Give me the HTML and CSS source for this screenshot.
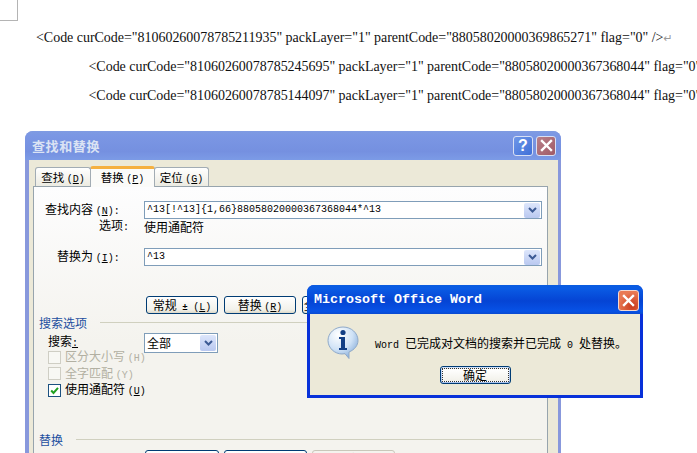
FILE: index.html
```html
<!DOCTYPE html>
<html lang="zh">
<head>
<meta charset="utf-8">
<title>查找和替换</title>
<link rel="stylesheet" href="styles.css">
</head>
<body>
<div class="page">
  <div class="corner"></div>
  <div class="doc">
    <p class="line">&lt;Code curCode="81060260078785211935" packLayer="1" parentCode="88058020000369865271" flag="0" /&gt;<span class="ret">↵</span></p>
    <p class="line indent">&lt;Code curCode="81060260078785245695" packLayer="1" parentCode="88058020000367368044" flag="0" /&gt;</p>
    <p class="line indent">&lt;Code curCode="81060260078785144097" packLayer="1" parentCode="88058020000367368044" flag="0" /&gt;</p>
  </div>

  <section class="dlg">
    <header class="dlg-title">
      <span class="dlg-name">查找和替换</span>
      <span class="cap-btn help">?</span>
      <span class="cap-btn close-dim"><svg width="13" height="13" viewBox="0 0 13 13"><path d="M2 2l9 9M11 2l-9 9" stroke="#fff" stroke-width="2.4" stroke-linecap="square"/></svg></span>
    </header>
    <div class="dlg-body">
      <div class="tabs">
        <span class="tab">查找 <span class="lat">(<u>D</u>)</span></span>
        <span class="tab active">替换 <span class="lat">(<u>P</u>)</span></span>
        <span class="tab">定位 <span class="lat">(<u>G</u>)</span></span>
      </div>
      <div class="panel">
        <div class="row">
          <span class="lab lab-a">查找内容 <span class="lat">(<u>N</u>):</span></span>
          <div class="combo"><span class="val">^13[!^13]{1,66}88058020000367368044*^13</span>
            <span class="drop"><svg width="9" height="7" viewBox="0 0 9 7"><path d="M1 1l3.5 3.5L8 1" fill="none" stroke="#3c5a94" stroke-width="2"/></svg></span></div>
        </div>
        <div class="row opts">
          <span class="lab lab-b">选项<span class="lat">:</span></span>
          <span>使用通配符</span>
        </div>
        <div class="row second">
          <span class="lab lab-c">替换为 <span class="lat">(<u>I</u>):</span></span>
          <div class="combo"><span class="val">^13</span>
            <span class="drop"><svg width="9" height="7" viewBox="0 0 9 7"><path d="M1 1l3.5 3.5L8 1" fill="none" stroke="#3c5a94" stroke-width="2"/></svg></span></div>
        </div>
        <div class="btns">
          <span class="btn b72">常规 <span class="arrows">±</span> <span class="lat">(<u>L</u>)</span></span>
          <span class="btn b72">替换 <span class="lat">(<u>R</u>)</span></span>
          <span class="btn b72">全部替换 <span class="lat">(<u>A</u>)</span></span>
        </div>
        <div class="sect"><span>搜索选项</span><i class="rule"></i></div>
        <div class="search">
          <div class="checks">
            <span class="search-lab">搜索<u class="lat">:</u></span>
            <label class="chk off"><i class="box"></i><span>区分大小写 <span class="lat">(H)</span></span></label>
            <label class="chk off"><i class="box"></i><span>全字匹配 <span class="lat">(Y)</span></span></label>
            <label class="chk"><i class="box on"><svg width="9" height="9" viewBox="0 0 9 9"><path d="M1.2 4.5l2.3 2.5L8 1.8" fill="none" stroke="#21a121" stroke-width="2"/></svg></i><span>使用通配符 <span class="lat">(<u>U</u>)</span></span></label>
          </div>
          <div class="select"><span class="val">全部</span>
            <span class="drop"><svg width="9" height="7" viewBox="0 0 9 7"><path d="M1 1l3.5 3.5L8 1" fill="none" stroke="#3c5a94" stroke-width="2"/></svg></span></div>
        </div>
        <div class="sect sect2"><span>替换</span><i class="rule"></i></div>
        <div class="btns low">
          <span class="btn b73">格式 <span class="lat">(<u>O</u>)</span> ▾</span>
          <span class="btn b83">特殊字符 <span class="lat">(<u>E</u>)</span> ▾</span>
          <span class="btn b83 dis">不限定格式</span>
        </div>
      </div>
    </div>
  </section>

  <section class="msg">
    <header class="msg-title">
      <span class="msg-name">Microsoft Office Word</span>
      <span class="msg-close"><svg width="13" height="13" viewBox="0 0 13 13"><path d="M2 2l9 9M11 2l-9 9" stroke="#fff" stroke-width="2.4" stroke-linecap="square"/></svg></span>
    </header>
    <div class="msg-body">
      <div class="msg-main">
        <svg class="info" width="32" height="33" viewBox="0 0 32 33">
          <defs><radialGradient id="bub" cx="35%" cy="25%" r="85%"><stop offset="0" stop-color="#ffffff"/><stop offset=".55" stop-color="#cfe2f6"/><stop offset="1" stop-color="#7ea6d6"/></radialGradient></defs>
          <path d="M16 1C7.7 1 1 7 1 14.5S7.7 28 15 28c1 0 2-.1 3-.3L22 32.500V26c5.500-2.200 9-6.500 9-11.500C31 7 24.300 1 16 1z" fill="url(#bub)" stroke="#8fa9c8"/>
          <circle cx="16" cy="6.500" r="2.600" fill="#123f86"/>
          <path d="M12 11h6v11h2v2h-8v-2h2v-9h-2z" fill="#123f86"/>
        </svg>
        <p class="msg-text">Word <span class="cjk">已完成对文档的搜索并已完成</span> 0 <span class="cjk">处替换。</span></p>
      </div>
      <div class="msg-actions"><span class="ok"><span class="ok-in">确定</span></span></div>
    </div>
  </section>
</div>
</body>
</html>
```
FILE: styles.css
```css
* { box-sizing: border-box; }
html, body { margin: 0; padding: 0; background: #fff; }
.page {
  position: relative;
  width: 697px;
  height: 453px;
  overflow: hidden;
  background: #fff;
  font: 12px/15px "Noto Sans CJK SC", "Liberation Mono", sans-serif;
  color: #000;
}
u { text-decoration: underline; }
.lat { font: 10px/15px "Liberation Mono", monospace; }

.corner {
  position: absolute;
  left: 0;
  top: 0;
  width: 18px;
  height: 21px;
  border-right: 1px solid #b4b4b4;
  border-bottom: 1px solid #b4b4b4;
}

.doc { padding: 28.500px 0 0 36px; white-space: nowrap; }
.line {
  margin: 0 0 11px;
  height: 18px;
  font: 14px/18px "Liberation Serif", serif;
  letter-spacing: -.03px;
  color: #111;
}
.indent { padding-left: 52.5px; }
.ret { color: #999; font: 11px/18px "DejaVu Sans", sans-serif; }

/* main dialog, a window on the canvas */
.dlg {
  position: absolute;
  left: 25px;
  top: 131px;
  width: 536px;
  height: 340px;
  display: flex;
  flex-direction: column;
  border-radius: 8px 8px 0 0;
  background: #8898dc;
  overflow: hidden;
}
.dlg-title {
  height: 29px;
  flex: none;
  display: flex;
  align-items: center;
  gap: 3px;
  padding: 0 5px 0 7px;
  background: linear-gradient(#7f9be2 0, #7b97e4 15%, #7590e0 70%, #7c9be6 100%);
}
.dlg-name {
  flex: 1;
  font: bold 13px/16px "Noto Sans CJK SC", sans-serif;
  letter-spacing: .6px;
  color: #dbe3f4;
}
.cap-btn {
  width: 20px;
  height: 20px;
  border-radius: 3px;
  border: 1px solid #d8e0f4;
  display: flex;
  align-items: center;
  justify-content: center;
}
.help {
  background: linear-gradient(135deg, #6f97e8, #3f6fd8);
  color: #fff;
  font: bold 16px/18px "Liberation Sans", sans-serif;
}
.close-dim { background: linear-gradient(135deg, #b9808a, #a05a66); }

.dlg-body {
  flex: 1;
  margin: 0 3px 0 4px;
  background: #ece9d8;
  padding: 6px 10px 0 4px;
  display: flex;
  flex-direction: column;
}
.tabs { display: flex; align-items: flex-end; height: 20px; padding-left: 2px; position: relative; z-index: 1; }
.tab {
  height: 19px;
  width: 56px;
  text-align: center;
  font-size: 11.500px;
  line-height: 19px;
  background: linear-gradient(#fff, #ecebe2);
  border: 1px solid #a2acb4;
  border-bottom: 0;
  border-radius: 3px 3px 0 0;
}
.tab.active {
  width: 65px;
  height: 21px;
  margin: 0 0 -1px -1px;
  background: #fbfbf9;
  border-top: 3px solid #f5b040;
  line-height: 17px;
  position: relative;
}
.tab.active + .tab { margin-left: -1px; width: 55px; }

.panel {
  flex: 1;
  border: 1px solid #97a4ad;
  padding: 14px 5px 0 0;
  background: linear-gradient(#fdfdfe, #f4f3ee 55%);
}
.row { display: grid; grid-template-columns: 110px 1fr; align-items: center; }
.lab { white-space: nowrap; }
.lab-a { padding-left: 11px; }
.lab-b { padding-left: 65px; }
.lab-c { padding-left: 23px; }
.opts { height: 15px; margin-top: -2px; }
.second { margin-top: 16px; }

.combo, .select {
  height: 18px;
  border: 1px solid #7f9db9;
  background: #fff;
  display: flex;
  align-items: center;
  justify-content: space-between;
  padding: 0 1px 0 2px;
}
.val { font: 10px/16px "Liberation Mono", monospace; }
.select .val { font: 12px/16px "Noto Sans CJK SC", sans-serif; }
.drop {
  width: 16px;
  height: 15px;
  border-radius: 2px;
  background: linear-gradient(#dde6fb, #b9c8f0);
  display: flex;
  align-items: center;
  justify-content: center;
}

.btns { display: flex; gap: 6px; margin: 30px 0 0 112px; }
.btn {
  flex: none;
  height: 18px;
  border: 1px solid #003c74;
  border-radius: 3px;
  background: linear-gradient(#fff, #f2f1ea 80%, #dcd8c8);
  text-align: center;
  line-height: 15px;
  white-space: nowrap;
}
.b72 { width: 72px; }
.b73 { width: 74px; }
.b83 { width: 83px; }
.dis { color: #aca899; border-color: #c9c7ba; }
.arrows { font: bold 9px/15px "Liberation Sans", sans-serif; margin: 0 3px; }

.sect { display: flex; align-items: center; gap: 13px; margin: 1px 0 0 5px; color: #1d4f9f; height: 15px; }
.rule { flex: 1; height: 1px; background: #d0d0bf; }
.sect2 { margin-top: 33px; }

.search { display: flex; margin: 3px 0 0 14px; }
.checks { width: 96px; display: flex; flex-direction: column; white-space: nowrap; }
.search-lab { height: 16px; line-height: 15px; }
.chk { height: 16.500px; display: flex; align-items: center; gap: 4px; font-size: 12px; }
.chk.off { color: #b2b0a2; }
.box {
  width: 13px;
  height: 13px;
  flex: none;
  border: 1px solid #cfcec4;
  background: #f8f8f4;
  display: flex;
  align-items: center;
  justify-content: center;
}
.box.on { border-color: #1c5180; background: #fff; }
.select { width: 74px; height: 20px; }
.select .drop { height: 16px; }

.low { margin: 3px 0 0 111px; gap: 5px; }
.low .dis { background: #f4f3ee; }

/* message box, a window over the dialog */
.msg {
  position: absolute;
  left: 307px;
  top: 285px;
  width: 336px;
  height: 113px;
  display: flex;
  flex-direction: column;
  border-radius: 7px 7px 0 0;
  background: #0831d9;
  overflow: hidden;
}
.msg-title {
  height: 29px;
  flex: none;
  display: flex;
  align-items: center;
  justify-content: space-between;
  padding: 1px 4px 0 7px;
  background: linear-gradient(#0a5ce0 0, #0a5be4 12%, #0544d4 55%, #0752e6 90%, #0a4ad0 100%);
}
.msg-name {
  font: bold 13.330px/16px "Liberation Mono", monospace;
  color: #fff;
  white-space: nowrap;
}
.msg-close {
  width: 21px;
  height: 21px;
  border: 1px solid #f3d8cf;
  border-radius: 3px;
  background: radial-gradient(circle at 70% 80%, #c93a1c, #e97a54 70%);
  display: flex;
  align-items: center;
  justify-content: center;
}
.msg-body {
  flex: 1;
  margin: 0 3px 3px;
  background: #ece9d8;
  display: flex;
  flex-direction: column;
}
.msg-main { display: flex; align-items: center; gap: 16px; padding: 12px 0 0 17px; }
.info { flex: none; }
.msg-text {
  margin: 3px 0 0;
  font: 10px/15px "Liberation Mono", monospace;
  white-space: nowrap;
}
.cjk { font: 12px/15px "Noto Sans CJK SC", sans-serif; }
.msg-actions { display: flex; justify-content: center; margin-top: 7px; }
.ok {
  width: 71px;
  height: 18px;
  border: 1px solid #003c74;
  border-radius: 3px;
  padding: 1px;
  background: linear-gradient(#cfe0fb, #a9c2ee);
}
.ok-in {
  display: block;
  height: 14px;
  line-height: 12px;
  text-align: center;
  border: 1px dotted #333;
  background: linear-gradient(#fff, #f2f1ea);
}
```
